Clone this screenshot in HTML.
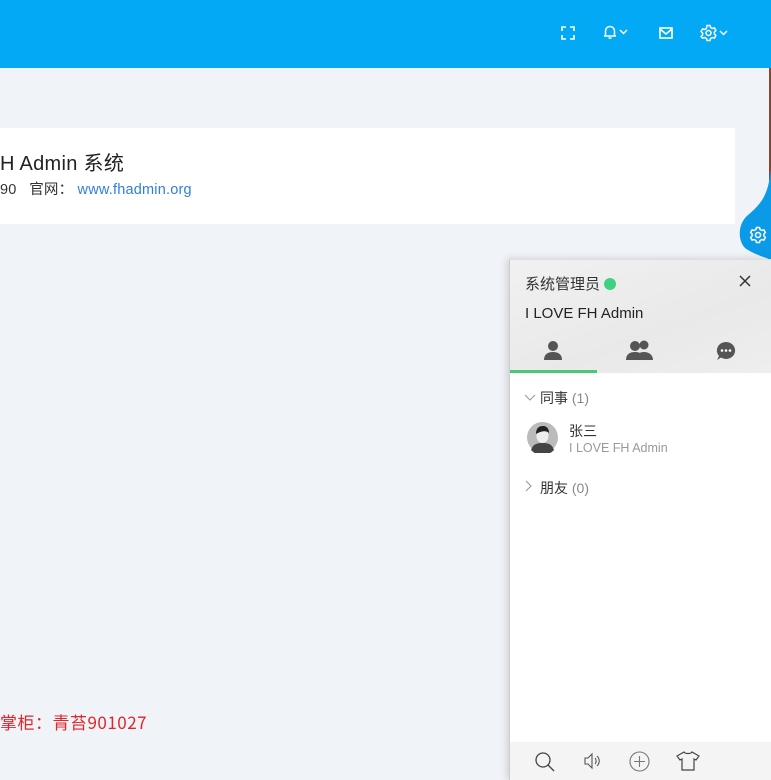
<!DOCTYPE html>
<html><head><meta charset="utf-8"><style>
*{margin:0;padding:0;box-sizing:border-box}
body{width:771px;height:780px;overflow:hidden;background:#f0f3f7;font-family:"Liberation Sans","Noto Sans CJK SC",sans-serif;position:relative}
.hdr{position:absolute;left:0;top:0;width:771px;height:68px;background:#03a9f4}
.ic{position:absolute;top:25px}
.card{position:absolute;left:0;top:128px;width:735px;height:96px;background:#fff}
.t1{position:absolute;left:0;top:147px;font-size:20px;color:#222;letter-spacing:.3px}
.t2{position:absolute;left:0;top:178px;font-size:14.5px;color:#333;letter-spacing:.2px}
.t2 a{color:#2f7ee0;text-decoration:none}
.red{position:absolute;left:0;top:709px;font-size:17px;color:#e0252a;font-family:"Noto Sans CJK SC",sans-serif;letter-spacing:.5px}
.panel{position:absolute;left:509px;top:259px;width:262px;height:521px;background:#fff;border-left:1px solid #ccc;border-top:1px solid #ddd;box-shadow:-2px 0 8px rgba(0,0,0,.15)}
.ph{position:absolute;left:0;top:0;width:262px;height:113px;background:linear-gradient(160deg,#f1f1f1,#e9e9e9 60%,#eee)}
.foot{position:absolute;left:0;bottom:0;width:262px;height:38px;background:#f4f4f4}
</style></head><body>
<div class="hdr">
<svg class="ic" style="left:561px;top:26px" width="14" height="14" viewBox="0 0 14 14" fill="none" stroke="#fff" stroke-width="1.6"><path d="M1 5V1h4M9 1h4v4M13 9v4H9M5 13H1V9"/></svg>
<svg class="ic" style="left:602px;top:24px" width="28" height="16" viewBox="0 0 28 16" fill="none" stroke="#fff" stroke-width="1.5"><path d="M2 12h12M3.5 12V7a4.5 4.5 0 0 1 9 0v5M6.5 14h3M18 6l3.5 3.5L25 6"/></svg>
<svg class="ic" style="left:659px;top:27px" width="14" height="12" viewBox="0 0 14 12" fill="none" stroke="#fff" stroke-width="1.6"><rect x="1" y="1" width="12" height="10"/><path d="M1 2l6 5 6-5"/></svg>
<svg class="ic" style="left:700px;top:24px" width="30" height="18" viewBox="0 0 30 18" fill="none" stroke="#fff" stroke-width="1.5"><circle cx="8.5" cy="9" r="2.5"/><path d="M7 1.5h3l.6 2 1.8 1 2-.6 1.5 2.6-1.5 1.5v2l1.5 1.5-1.5 2.6-2-.6-1.8 1-.6 2H7l-.6-2-1.8-1-2 .6L1.1 12.5l1.5-1.5V9L1.1 7.5 2.6 4.9l2 .6 1.8-1z"/><path d="M20 7l3.5 3.5L27 7"/></svg>
</div>
<div class="card"></div>
<div class="t1">H Admin 系统</div>
<div class="t2">90 &nbsp; 官网： <a>www.fhadmin.org</a></div>
<div class="red">掌柜：青苔901027</div>
<div style="position:absolute;left:769px;top:68px;width:2px;height:192px;background:#7a4a3a"></div>
<svg style="position:absolute;left:738px;top:170px" width="33" height="92" viewBox="0 0 33 92"><path d="M33 0C30 20 28 30 10 45C-2 55 0 75 10 80C20 86 30 88 33 90Z" fill="#0a9ae8"/><g fill="none" stroke="#fff" stroke-width="1.5"><circle cx="20" cy="65" r="2.5"/><path d="M18.5 57.5h3l.6 2 1.8 1 2-.6 1.5 2.6-1.5 1.5v2l1.5 1.5-1.5 2.6-2-.6-1.8 1-.6 2h-3l-.6-2-1.8-1-2 .6-1.5-2.6 1.5-1.5v-2l-1.5-1.5 1.5-2.6 2 .6 1.8-1z"/></g></svg>
<div class="panel">
<div class="ph"></div>
<div style="position:absolute;left:15px;top:13px;font-size:15px;color:#333">系统管理员 <span style="display:inline-block;width:12px;height:12px;border-radius:50%;background:#3fd181;vertical-align:-1px"></span></div>
<svg style="position:absolute;right:20px;top:15px" width="12" height="12" viewBox="0 0 12 12" stroke="#333" stroke-width="1.5"><path d="M1 1l10 10M11 1L1 11"/></svg>
<div style="position:absolute;left:15px;top:45px;font-size:15px;color:#222">I LOVE FH Admin</div>
<svg style="position:absolute;left:33px;top:80px" width="20" height="20" viewBox="0 0 20 20" fill="#555"><circle cx="10" cy="6" r="5"/><path d="M1 20c0-6 4-8 9-8s9 2 9 8z"/></svg>
<svg style="position:absolute;left:115px;top:80px" width="30" height="20" viewBox="0 0 30 20" fill="#555"><circle cx="19" cy="5" r="4.5"/><path d="M11 20c0-5 3-8 8-8s9 3 9 8z"/><circle cx="10" cy="6" r="5"/><path d="M1 20c0-6 4-8 9-8s9 2 9 8z"/></svg>
<svg style="position:absolute;left:206px;top:81px" width="20" height="20" viewBox="0 0 20 20"><path d="M10 1a9 8.5 0 1 1-5 15.5L1 19l2-4A9 8.5 0 0 1 10 1z" fill="#555"/><circle cx="6" cy="9.5" r="1.3" fill="#fff"/><circle cx="10" cy="9.5" r="1.3" fill="#fff"/><circle cx="14" cy="9.5" r="1.3" fill="#fff"/></svg>
<div style="position:absolute;left:0;top:110px;width:87px;height:3px;background:#4ac87a"></div>
<svg style="position:absolute;left:14px;top:134px" width="12" height="8" viewBox="0 0 12 8" fill="none" stroke="#999" stroke-width="1.1"><path d="M1 1l5 5 5-5"/></svg>
<div style="position:absolute;left:30px;top:128px;font-size:14px;color:#333">同事 <span style="color:#888">(1)</span></div>
<svg style="position:absolute;left:17px;top:162px" width="31" height="31" viewBox="0 0 31 31"><circle cx="15.5" cy="15.5" r="15.5" fill="#bbb"/><path d="M4 28c2-6 6-7 11.5-7S25 22 27 28a15.5 15.5 0 0 1-23 0z" fill="#444"/><ellipse cx="15.5" cy="14" rx="6" ry="7" fill="#eee"/><path d="M9 12c0-6 3-8 7-8s6 3 6 7c-2-2-6-3-13 1z" fill="#222"/></svg>
<div style="position:absolute;left:59px;top:161px;font-size:14px;color:#333">张三</div>
<div style="position:absolute;left:59px;top:181px;font-size:12.5px;color:#999">I LOVE FH Admin</div>
<svg style="position:absolute;left:15px;top:220px" width="8" height="12" viewBox="0 0 8 12" fill="none" stroke="#999" stroke-width="1.1"><path d="M1 1l5 5-5 5"/></svg>
<div style="position:absolute;left:30px;top:218px;font-size:14px;color:#333">朋友 <span style="color:#888">(0)</span></div>
<div class="foot">
<svg style="position:absolute;left:24px;top:9px" width="22" height="22" viewBox="0 0 22 22" fill="none" stroke="#444" stroke-width="1.3"><circle cx="9" cy="9" r="7"/><path d="M14 14l6 6"/></svg>
<svg style="position:absolute;left:74px;top:10px" width="18" height="18" viewBox="0 0 18 18" fill="none" stroke="#555" stroke-width="1.1"><path d="M1 6h3l4-4v14l-4-4H1zM11 6c1.5 1.5 1.5 4.5 0 6M13 4c3 3 3 7 0 10"/></svg>
<svg style="position:absolute;left:119px;top:9px" width="21" height="21" viewBox="0 0 21 21" fill="none" stroke="#777" stroke-width="1.1"><circle cx="10.5" cy="10.5" r="9.5"/><path d="M10.5 5v11M5 10.5h11"/></svg>
<svg style="position:absolute;left:166px;top:9px" width="24" height="20" viewBox="0 0 24 20" fill="none" stroke="#444" stroke-width="1.2"><path d="M8 1L1 5l3 4 2-1v11h12V8l2 1 3-4-7-4c-1 2-7 2-8 0z"/></svg>
</div>
</div>
</body></html>
